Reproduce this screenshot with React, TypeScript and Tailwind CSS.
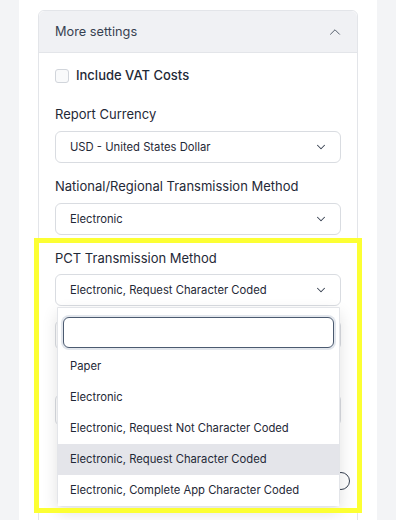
import { ChevronDown, ChevronUp } from "lucide-react";

const pctOptions = [
  "Paper",
  "Electronic",
  "Electronic, Request Not Character Coded",
  "Electronic, Request Character Coded",
  "Electronic, Complete App Character Coded",
];

const SelectBox = ({ value }: { value: string }) => (
  <div className="flex h-[32px] w-full items-center justify-between rounded-md border border-[#d9dce1] bg-white pr-[12px] pl-[14px] text-[11.25px] text-[#1f2937]">
    <span>{value}</span>
    <ChevronDown size={14} strokeWidth={1.75} className="text-[#374151]" />
  </div>
);

const Label = ({ children }: { children: string }) => (
  <div className="h-[20px] text-[13px] leading-[20px] text-[#1f2937]">{children}</div>
);

export default function App() {
  const selected = "Electronic, Request Character Coded";

  return (
    <div
      className="relative h-[520px] w-[396px] overflow-hidden bg-[#f3f4f6]"
      style={{ fontFamily: "Inter, 'Noto Sans', sans-serif" }}
    >
      <div className="mx-[19px] h-full bg-white px-[19px] pt-[10px]">
        <div className="h-[600px] rounded-t-md border border-[#e3e5e9]">
          {/* header */}
          <div className="flex h-[42px] items-center justify-between rounded-t-md border-b border-[#e3e5e9] bg-[#f0f1f4] pr-[13px] pl-[16px]">
            <span className="text-[12.75px] text-[#374151]">More settings</span>
            <ChevronUp size={18} strokeWidth={1.25} className="text-[#4b5563]" />
          </div>

          {/* body */}
          <div className="px-[16px] pt-[15px]">
            <label className="flex h-[16px] items-center gap-[7px]">
              <span className="h-[14px] w-[14px] rounded-[3px] border border-[#d1d5db] bg-[#f9fafb]" />
              <span className="text-[13px] font-medium text-[#1f2937]">Include VAT Costs</span>
            </label>

            <div className="mt-[20px]">
              <Label>Report Currency</Label>
            </div>
            <div className="mt-[7px]">
              <SelectBox value="USD - United States Dollar" />
            </div>

            <div className="mt-[13px]">
              <Label>National/Regional Transmission Method</Label>
            </div>
            <div className="mt-[7px]">
              <SelectBox value="Electronic" />
            </div>

            <div className="mt-[13px]">
              <Label>PCT Transmission Method</Label>
            </div>
            <div className="relative mt-[6px]">
              <SelectBox value={selected} />

              {/* open dropdown */}
              <div className="absolute top-full right-[1px] left-[2px] z-10 mt-[1px] rounded-b-md border border-[#e3e5e9] bg-white shadow-[0_6px_16px_rgba(0,0,0,0.12)]">
                <div className="px-[5px] pt-[9px] pb-[3px]">
                  <div className="h-[31px] rounded-md border-[1.5px] border-[#4b5a70] bg-white shadow-[0_0_0_2px_#e2e6ec]" />
                </div>
                {pctOptions.map((option) => (
                  <div
                    key={option}
                    className={
                      option === selected
                        ? "flex h-[31px] items-center bg-[#e4e5ea] px-[12px] text-[11.25px] text-[#1f2937]"
                        : "flex h-[31px] items-center bg-white px-[12px] text-[11.25px] text-[#1f2937]"
                    }
                  >
                    {option}
                  </div>
                ))}
              </div>
            </div>

            {/* fields hidden behind the dropdown */}
            <div className="mt-[14px] h-[30px] rounded-md border border-[#d9dce1]" />
            <div className="mt-[44px] h-[32px] rounded-md border border-[#d9dce1]" />
            <div className="mt-[46px] flex items-center justify-end">
              <span className="mr-[-9px] h-[18px] w-[18px] rounded-full border border-[#374151]" />
            </div>
          </div>
        </div>
      </div>

      {/* highlight annotation */}
      <div className="pointer-events-none absolute top-[238px] left-[34px] z-20 h-[275px] w-[328px] border-[5px] border-[#fcff33]" />
    </div>
  );
}
